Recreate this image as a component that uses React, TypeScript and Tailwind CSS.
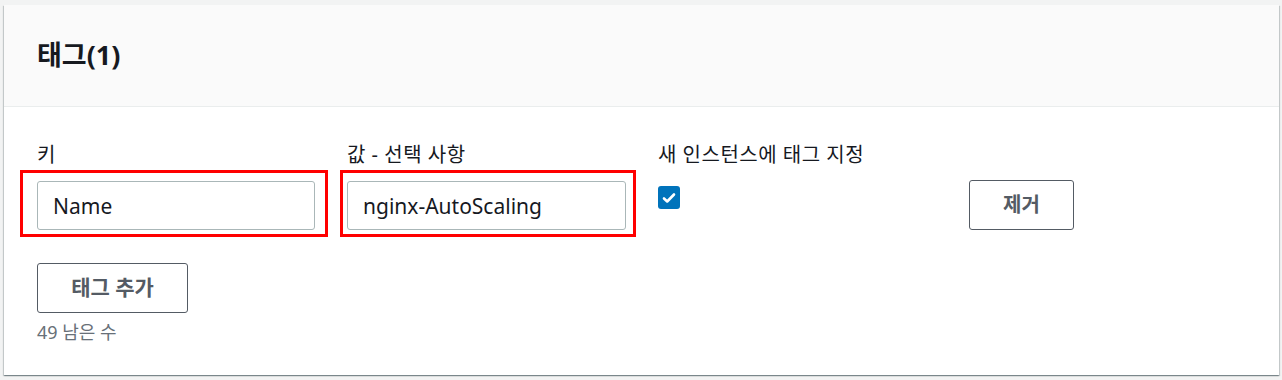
const font = { fontFamily: '"Noto Sans", "Noto Sans CJK KR", sans-serif' }

function Field({ label, value, box }: { label: string; value: string; box: string }) {
  return (
    <div className="flex flex-col">
      <label className="h-[22px] text-[20px] leading-[22px] tracking-[0.5px] text-[#16191f]">{label}</label>
      <div className="relative mt-[15px]">
        <input
          readOnly
          value={value}
          className="h-[49px] w-full rounded-[3px] border border-[#aab7b8] bg-white px-[15px] text-[21px] text-[#16191f] outline-none"
          style={font}
        />
        {/* annotation box drawn over the screenshot */}
        <div className={`pointer-events-none absolute border-[3px] border-[#ff0000] ${box}`} />
      </div>
    </div>
  )
}

export default function App() {
  return (
    <div className="h-[380px] w-[1282px] bg-[#f2f3f3] pt-[5px] pl-[4px]" style={font}>
      <div className="h-[370px] w-[1275px] bg-white shadow-[0_1px_1px_0_rgba(0,28,36,0.3),1px_1px_1px_0_rgba(0,28,36,0.15),-1px_1px_1px_0_rgba(0,28,36,0.15)]">
        <div className="flex h-[102px] items-center border-b border-[#eaeded] bg-[#fafafa] px-[33px]">
          <h2 className="text-[27px] font-bold text-[#16191f]">태그(1)</h2>
        </div>

        <div className="px-[33px] pt-[37px]">
          <div className="grid grid-cols-[278px_279px_279px_auto] gap-x-[32px]">
            <Field label="키" value="Name" box="-top-[11px] -bottom-[7px] -left-[17px] -right-[13px]" />
            <Field label="값 - 선택 사항" value="nginx-AutoScaling" box="-top-[11px] -bottom-[7px] -left-[7px] -right-[10px]" />
            <div className="flex flex-col">
              <span className="h-[22px] whitespace-nowrap text-[20px] leading-[22px] tracking-[0.5px] text-[#16191f]">새 인스턴스에 태그 지정</span>
              <div className="mt-[20px] flex h-[23px] w-[22px] items-center justify-center rounded-[3px] bg-[#0073bb]">
                <svg viewBox="0 0 16 16" className="h-[16px] w-[16px]">
                  <path d="M3 8.5l3.2 3L13 4.5" fill="none" stroke="white" strokeWidth="2.6" strokeLinecap="round" strokeLinejoin="round" />
                </svg>
              </div>
            </div>
            <div className="pt-[36px]">
              <button className="h-[50px] w-[105px] rounded-[3px] border-[1.5px] border-[#545b64] bg-white text-[20px] font-bold text-[#545b64]">
                제거
              </button>
            </div>
          </div>

          <button className="mt-[33px] h-[50px] w-[151px] rounded-[3px] border-[1.5px] border-[#545b64] bg-white text-[21px] font-bold text-[#545b64]">
            태그 추가
          </button>
          <div className="mt-[9px] text-[18px] leading-[20px] text-[#687078]">49 남은 수</div>
        </div>
      </div>
    </div>
  )
}
